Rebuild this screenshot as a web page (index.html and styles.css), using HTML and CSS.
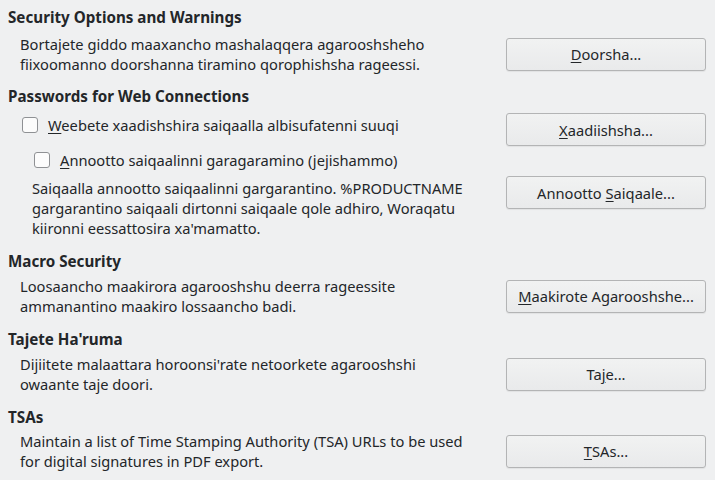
FILE: index.html
```html
<!DOCTYPE html>
<html lang="en">
<head>
<meta charset="utf-8">
<title>Security</title>
<link rel="stylesheet" href="styles.css">
</head>
<body>
<div class="page">
  <section class="sec sec-first">
    <h2 class="head">Security Options and Warnings</h2>
    <div class="row">
      <p class="desc">Bortajete giddo maaxancho mashalaqqera agarooshsheho<br>fiixoomanno doorshanna tiramino qorophishsha rageessi.</p>
      <button class="btn"><u>D</u>oorsha...</button>
    </div>
  </section>

  <section class="sec sec-pw">
    <h2 class="head">Passwords for Web Connections</h2>
    <div class="row row-check1">
      <label class="check check-top"><span class="box"></span><span><u>W</u>eebete xaadishshira saiqaalla albisufatenni suuqi</span></label>
      <button class="btn"><u>X</u>aadiishsha...</button>
    </div>
    <div class="row row-check2">
      <label class="check"><span class="box"></span><span><u>A</u>nnootto saiqaalinni garagaramino (jejishammo)</span></label>
    </div>
    <div class="row row-master">
      <p class="desc">Saiqaalla annootto saiqaalinni gargarantino. %PRODUCTNAME<br>gargarantino saiqaali dirtonni saiqaale qole adhiro, Woraqatu<br>kiironni eessattosira xa'mamatto.</p>
      <button class="btn btn-top">Annootto <u>S</u>aiqaale...</button>
    </div>
  </section>

  <section class="sec sec-macro">
    <h2 class="head">Macro Security</h2>
    <div class="row">
      <p class="desc">Loosaancho maakirora agarooshshu deerra rageessite<br>ammanantino maakiro lossaancho badi.</p>
      <button class="btn"><u>M</u>aakirote Agarooshshe...</button>
    </div>
  </section>

  <section class="sec sec-cert">
    <h2 class="head">Tajete Ha'ruma</h2>
    <div class="row">
      <p class="desc">Dijiitete malaattara horoonsi'rate netoorkete agarooshshi<br>owaante taje doori.</p>
      <button class="btn">Ta<u>j</u>e...</button>
    </div>
  </section>

  <section class="sec sec-tsa">
    <h2 class="head">TSAs</h2>
    <div class="row">
      <p class="desc">Maintain a list of Time Stamping Authority (TSA) URLs to be used<br>for digital signatures in PDF export.</p>
      <button class="btn"><u>T</u>SAs...</button>
    </div>
  </section>
</div>
</body>
</html>
```

FILE: styles.css
```css
html, body {
  margin: 0;
  padding: 0;
  background: #eff0f1;
}

body {
  font-family: "Noto Sans", "Open Sans", sans-serif;
  font-size: 14.67px;
  color: #232629;
}

.page {
  padding: 8px 9px 0 8px;
}

.sec {
  margin-top: 12px;
}

.sec-first {
  margin-top: 0;
}

.sec-pw {
  margin-top: 13px;
}

.sec-macro {
  margin-top: 14px;
}

.sec-cert {
  margin-top: 14px;
}

.sec-tsa {
  margin-top: 14px;
}

.head {
  margin: 0 0 7px 0;
  font-size: 15.2px;
  font-weight: bold;
  line-height: 19px;
}

.sec-macro .head,
.sec-cert .head {
  margin-bottom: 5px;
}

.sec-tsa .head {
  margin-bottom: 4px;
}

.row {
  display: grid;
  grid-template-columns: 1fr 200px;
  align-items: center;
  padding-left: 12px;
}

.desc {
  margin: 0;
  line-height: 20px;
  white-space: nowrap;
}

.row-check1 {
  margin-top: 7px;
  padding-left: 14px;
  height: 33px;
}

.row-check2 {
  padding-left: 26px;
  height: 25px;
  margin-top: 1px;
}

.row-master {
  padding-left: 24px;
  margin-top: 6px;
}

.check {
  display: flex;
  align-items: center;
  gap: 10px;
  line-height: 20px;
  white-space: nowrap;
}

.check-top {
  align-self: start;
  margin-top: 2px;
}

.box {
  width: 14px;
  height: 14px;
  border: 1px solid #8f9194;
  border-radius: 3px;
  background: #fcfcfc;
  flex: none;
}

.btn {
  height: 33px;
  width: 200px;
  box-sizing: border-box;
  border: 1px solid #b3b4b5;
  border-radius: 3px;
  background: linear-gradient(#f1f2f2, #e9eaeb);
  box-shadow: 0 1px 1px rgba(0, 0, 0, 0.06);
  font-family: "Noto Sans", "Open Sans", sans-serif;
  font-size: 14.67px;
  color: #232629;
  padding: 0 6px;
  line-height: 20px;
  white-space: nowrap;
}

.btn-top {
  align-self: start;
  margin-top: -2px;
}

u {
  text-decoration: underline;
  text-underline-offset: 2px;
}
```
